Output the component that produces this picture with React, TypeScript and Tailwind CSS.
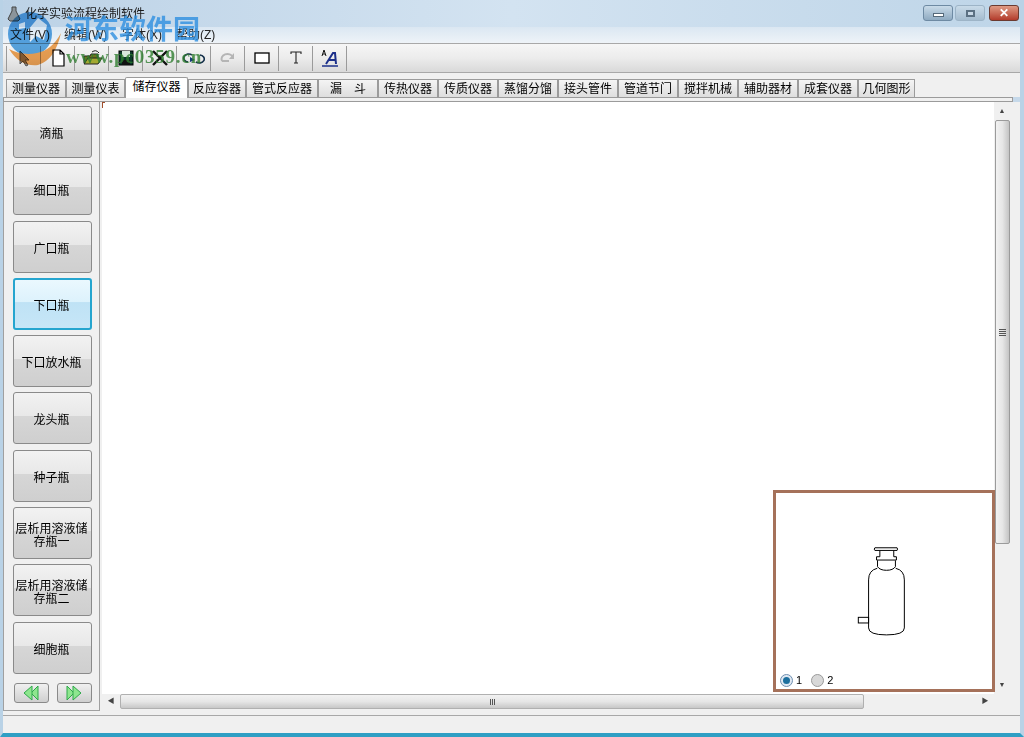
import React from "react";

const tabs = [
  { label: "测量仪器", w: "w-[60px]" },
  { label: "测量仪表", w: "w-[59px]" },
  { label: "储存仪器", w: "w-[63px]", active: true },
  { label: "反应容器", w: "w-[58px]" },
  { label: "管式反应器", w: "w-[72px]" },
  { label: "漏　斗", w: "w-[60px]" },
  { label: "传热仪器", w: "w-[60px]" },
  { label: "传质仪器", w: "w-[60px]" },
  { label: "蒸馏分馏", w: "w-[60px]" },
  { label: "接头管件", w: "w-[60px]" },
  { label: "管道节门", w: "w-[60px]" },
  { label: "搅拌机械", w: "w-[60px]" },
  { label: "辅助器材", w: "w-[60px]" },
  { label: "成套仪器", w: "w-[60px]" },
  { label: "几何图形", w: "w-[57px]" },
];

const bottles = [
  { label: "滴瓶" },
  { label: "细口瓶" },
  { label: "广口瓶" },
  { label: "下口瓶", active: true },
  { label: "下口放水瓶" },
  { label: "龙头瓶" },
  { label: "种子瓶" },
  { label: "层析用溶液储存瓶一" },
  { label: "层析用溶液储存瓶二" },
  { label: "细胞瓶" },
];

const Sep = () => <div className="w-px h-[25px] bg-[#9a9a9a] shrink-0" />;

const ToolIcon = ({ children }: { children: React.ReactNode }) => (
  <div className="w-[33px] h-[25px] flex items-center justify-center shrink-0">
    <svg width="22" height="22" viewBox="0 0 22 22">
      {children}
    </svg>
  </div>
);

const DoubleArrow = ({ left }: { left?: boolean }) => (
  <svg width="20" height="16" viewBox="0 0 20 16">
    <g
      fill="#8ee68e"
      stroke="#2fa84a"
      strokeWidth="1"
      transform={left ? "translate(20,0) scale(-1,1)" : undefined}
    >
      <path d="M3 1 L10 8 L3 15 Z" />
      <path d="M9 1 L17 8 L9 15 Z" />
    </g>
  </svg>
);

const Radio = ({ on, label }: { on?: boolean; label: string }) => (
  <div className="flex items-center gap-[3px]">
    <div
      className={`w-[13px] h-[13px] rounded-full border flex items-center justify-center ${
        on ? "border-[#6f8fb0] bg-[#dfe8f2]" : "border-[#9a9a9a] bg-[#d8d8d8]"
      }`}
    >
      {on && <div className="w-[7px] h-[7px] rounded-full bg-[#1c6f9e]" />}
    </div>
    <span className="text-[11px] leading-none text-black">{label}</span>
  </div>
);

export default function App() {
  return (
    <div
      className="relative w-[1024px] h-[737px] overflow-hidden flex flex-col bg-[#c6d9ea] border-l-[3px] border-r-[4px] border-b-[4px] border-[#b9d2e6] border-b-[#2f9fc4] text-black text-[12px]"
      style={{ fontFamily: '"Liberation Sans", "Noto Sans CJK SC", sans-serif' }}
    >
      {/* title bar */}
      <div className="h-[27px] -ml-[3px] -mr-[4px] shrink-0 flex items-center justify-between pl-[6px] pr-[5px] bg-gradient-to-r from-[#bcd2e6] via-[#d3e3f1] to-[#bed5e8] rounded-t-[5px]">
        <div className="flex items-center gap-[3px]">
          <svg width="16" height="18" viewBox="0 0 16 18">
            <path d="M6 2 L10 2 L10 6 L14 14 L12 16 L4 16 L2 14 L6 6 Z" fill="#8b949b" stroke="#444" />
          </svg>
          <span className="text-[12px] text-[#1a1a1a]">化学实验流程绘制软件</span>
        </div>
        <div className="flex items-start self-start h-[20px] mt-[5px]">
          <div className="w-[30px] h-[16px] rounded-[3px] border border-[#6e8aa3] bg-gradient-to-b from-[#c9dbe9] to-[#8faac1] flex items-center justify-center">
            <div className="w-[11px] h-[4px] mt-[3px] bg-white border border-[#55697a]" />
          </div>
          <div className="ml-[2px] w-[30px] h-[16px] rounded-[3px] border border-[#9db4c7] bg-gradient-to-b from-[#c9dbe9] to-[#a5bccf] flex items-center justify-center">
            <div className="w-[9px] h-[7px] bg-[#c8d8e6] border-2 border-[#5b7082]" />
          </div>
          <div className="ml-[4px] w-[30px] h-[16px] rounded-[3px] border border-[#6b3a30] bg-gradient-to-b from-[#de9a84] to-[#b23a2b] flex items-center justify-center text-white font-bold text-[12px] leading-none">
            ✕
          </div>
        </div>
      </div>

      {/* menu */}
      <div className="h-[16px] shrink-0 flex items-center bg-gradient-to-b from-[#dbe7f2] to-[#eef3f8] pl-[7px]">
        <span className="w-[54px] text-[#222]">文件(V)</span>
        <span className="w-[58px] text-[#222]">编辑(W)</span>
        <span className="w-[54px] text-[#222]">字体(X)</span>
        <span className="text-[#222]">帮助(Z)</span>
      </div>

      {/* toolbar */}
      <div className="h-[30px] shrink-0 flex items-center pl-[3px] border-y border-[#a8a8a8] bg-gradient-to-b from-[#f6f6f6] via-[#ececec] to-[#d9d9d9]">
        <Sep />
        <ToolIcon>
          <path d="M7 4 L7 17 L10 14 L13 19 L15 18 L12 13 L16 13 Z" fill="#888" stroke="#555" />
        </ToolIcon>
        <Sep />
        <ToolIcon>
          <path d="M6 3 H13 L17 7 V19 H6 Z M13 3 V7 H17" fill="#fff" stroke="#000" strokeWidth="1.2" />
        </ToolIcon>
        <Sep />
        <ToolIcon>
          <path d="M3 9 H9 L10 7 H17 V16 H3 Z" fill="#6f7420" stroke="#222" />
          <path d="M3 17 L7 11 H21 L17 17 Z" fill="#a3a932" stroke="#222" />
          <path d="M11 5 Q15 2 18 6" fill="none" stroke="#222" />
        </ToolIcon>
        <Sep />
        <ToolIcon>
          <rect x="4" y="4" width="14" height="14" fill="#0c3b2a" stroke="#000" />
          <rect x="7" y="4" width="8" height="6" fill="#d8e8dc" />
          <rect x="7" y="13" width="8" height="5" fill="#111" />
        </ToolIcon>
        <Sep />
        <ToolIcon>
          <path d="M4 4 L18 18 M18 4 L4 18" stroke="#111" strokeWidth="2.4" fill="none" />
        </ToolIcon>
        <Sep />
        <ToolIcon>
          <path d="M9 8 A5 4 0 1 0 5 15 M13 15 A5 4 0 1 0 17 8" fill="none" stroke="#15304a" strokeWidth="1.6" />
          <path d="M7 10 L12 13 L7 15 Z" fill="#163a78" />
        </ToolIcon>
        <Sep />
        <ToolIcon>
          <path d="M5 14 A6 5 0 0 1 16 10" fill="none" stroke="#b5b5b5" strokeWidth="2" />
          <path d="M17 6 V12 H12 Z" fill="#b5b5b5" />
          <path d="M5 14 H12" stroke="#b5b5b5" strokeWidth="2" />
        </ToolIcon>
        <Sep />
        <ToolIcon>
          <rect x="4" y="6" width="14" height="10" fill="#fff" stroke="#000" strokeWidth="1.3" />
        </ToolIcon>
        <Sep />
        <ToolIcon>
          <path d="M6 7 V5 H16 V7 M11 5 V16 M9 16 H13" fill="none" stroke="#222" strokeWidth="1.1" />
        </ToolIcon>
        <Sep />
        <ToolIcon>
          <path d="M3 9 L5 3 L7 9 M4 7 H6" fill="none" stroke="#111" />
          <path d="M7 17 L14 6 H16 L17 17 M10 13 H16" fill="none" stroke="#1b2f8a" strokeWidth="2" />
          <path d="M3 19 H19" stroke="#1b2f8a" strokeWidth="1.5" />
        </ToolIcon>
        <Sep />
      </div>

      {/* tab strip */}
      <div className="h-[24px] shrink-0 flex items-end pl-[3px] bg-[#f0f0f0]">
        {tabs.map((t) => (
          <div
            key={t.label}
            className={`${t.w} shrink-0 flex items-center justify-center whitespace-nowrap border border-[#9b9b9b] border-b-0 text-[12px] leading-none ${
              t.active
                ? "h-[21px] bg-white rounded-t-[2px] pb-[2px] relative z-10 -mb-px"
                : "h-[18px] bg-gradient-to-b from-[#f4f4f4] to-[#dedede]"
            }`}
          >
            {t.label}
          </div>
        ))}
      </div>
      <div className="h-[5px] shrink-0 mr-[7px] border border-[#9b9b9b] bg-[#f0f0f0]" />

      {/* main */}
      <div className="flex-1 min-h-0 flex bg-[#f0f0f0] pb-[4px]">
        <div className="w-[97px] shrink-0 flex flex-col items-center border border-[#a0a0a0] border-t-0 bg-[#f0f0f0] pt-[4px] pl-[2px]">
          <div className="flex flex-col gap-[5.3px]">
            {bottles.map((b) => (
              <div
                key={b.label}
                className={`w-[79px] h-[52px] flex items-center justify-center text-center rounded-[3px] border leading-[13px] pt-[5px] pr-[2px] ${
                  b.active
                    ? "border-2 border-[#25a5cf] bg-[linear-gradient(to_bottom,#eaf8fe_0%,#ddf2fc_45%,#bfe2f5_47%,#c6e6f7_100%)]"
                    : "border-[#8a8a8a] bg-[linear-gradient(to_bottom,#f2f2f2_0%,#e8e8e8_45%,#d6d6d6_47%,#cfcfcf_100%)]"
                }`}
              >
                {b.label}
              </div>
            ))}
          </div>
          <div className="flex gap-[8px] mt-[9px]">
            <div className="w-[35px] h-[20px] rounded-[3px] border border-[#8a8a8a] bg-gradient-to-b from-[#f0f0f0] to-[#cfcfcf] flex items-center justify-center">
              <DoubleArrow left />
            </div>
            <div className="w-[35px] h-[20px] rounded-[3px] border border-[#8a8a8a] bg-gradient-to-b from-[#f0f0f0] to-[#cfcfcf] flex items-center justify-center">
              <DoubleArrow />
            </div>
          </div>
        </div>

        <div className="ml-[2px] w-[908px] flex flex-col">
          <div className="flex-1 min-h-0 flex">
            {/* canvas */}
            <div className="w-[892px] bg-white relative">
              <div className="w-[3px] h-[6px] border-l border-t border-[#a0502e]" />
            </div>
            {/* vertical scrollbar */}
            <div className="w-[16px] flex flex-col items-center bg-[#f0f0f0]">
              <div className="h-[18px] shrink-0 flex items-center justify-center text-[#444] text-[7px]">▲</div>
              <div className="w-[15px] h-[424px] shrink-0 rounded-[2px] border border-[#9b9b9b] bg-gradient-to-r from-[#f2f2f2] via-[#e6e6e6] to-[#c4c4c4] flex flex-col items-center justify-center gap-[1px]">
                <div className="w-[7px] h-px bg-[#555]" />
                <div className="w-[7px] h-px bg-[#555]" />
                <div className="w-[7px] h-px bg-[#555]" />
                <div className="w-[7px] h-px bg-[#555]" />
              </div>
              <div className="flex-1" />
              <div className="h-[18px] shrink-0 flex items-center justify-center text-[#444] text-[7px]">▼</div>
            </div>
          </div>
          {/* horizontal scrollbar */}
          <div className="h-[17px] shrink-0 flex items-start bg-[#f0f0f0] w-[892px]">
            <div className="w-[18px] h-[15px] shrink-0 flex items-center justify-center text-[#444] text-[7px]">◀</div>
            <div className="w-[744px] h-[15px] shrink-0 rounded-[2px] border border-[#b0b0b0] bg-gradient-to-b from-[#f2f2f2] via-[#e6e6e6] to-[#c8c8c8] flex items-center justify-center gap-[1px]">
              <div className="w-px h-[6px] bg-[#555]" />
              <div className="w-px h-[6px] bg-[#555]" />
              <div className="w-px h-[6px] bg-[#555]" />
            </div>
            <div className="flex-1" />
            <div className="w-[18px] h-[15px] shrink-0 flex items-center justify-center text-[#444] text-[7px]">▶</div>
          </div>
        </div>
      </div>

      {/* status bar */}
      <div className="h-[18px] shrink-0 border-t border-[#a8a8a8] bg-[#f0f0f0]" />

      {/* preview window over the canvas */}
      <div className="absolute left-[770px] top-[490px] w-[222px] h-[202px] border-[3px] border-[#a5715a] bg-white">
        <svg
          className="absolute left-[79px] top-[52px]"
          width="53"
          height="93"
          viewBox="255 180 160 280"
          fill="none"
          stroke="#000"
          strokeWidth="3"
        >
          <path d="M315 188 H382 Q385 192 382 196 H315 Q311 192 315 188 Z" />
          <path d="M330 197 V215 H320 V225 H380 V215 H372 V197" />
          <path d="M323 226 V245 Q330 256 350 256 Q370 256 377 245 V226" />
          <path d="M322 250 Q296 256 296 285 V430 Q296 451 350 451 Q404 451 404 430 V285 Q404 256 378 250" />
          <rect x="265" y="398" width="31" height="17" />
        </svg>
        <div className="absolute left-[4px] bottom-[2px] flex gap-[9px]">
          <Radio on label="1" />
          <Radio label="2" />
        </div>
      </div>

      {/* watermark */}
      <svg
        className="absolute left-0 top-[10px] pointer-events-none mix-blend-multiply"
        width="67"
        height="60"
        viewBox="3 10 67 60"
      >
        <path
          fillRule="evenodd"
          d="M8 34 A22 22 0 1 1 52 34 A22 22 0 1 1 8 34 Z M38 18 L47 25 L44 40 L36 36 L30 42 L28 30 Z M19 24 L25 22 L25 28 L19 29 Z"
          fill="#5aa8e4"
        />
        <path d="M9 49 Q20 67 38 65 Q55 60 61 33 Q52 50 37 53 Q22 56 9 49 Z" fill="#f2a556" />
      </svg>
      <div className="absolute left-[62px] top-[13px] text-[27px] leading-[34px] font-bold text-[#2d8fe0]/80 pointer-events-none whitespace-nowrap">
        河东软件园
      </div>
      <div
        className="absolute left-[63px] top-[46px] text-[19px] leading-[22px] tracking-[0.8px] font-bold text-[#2f7d2f]/80 pointer-events-none whitespace-nowrap"
        style={{ fontFamily: '"Liberation Serif", serif' }}
      >
        www.pc0359.cn
      </div>
    </div>
  );
}
